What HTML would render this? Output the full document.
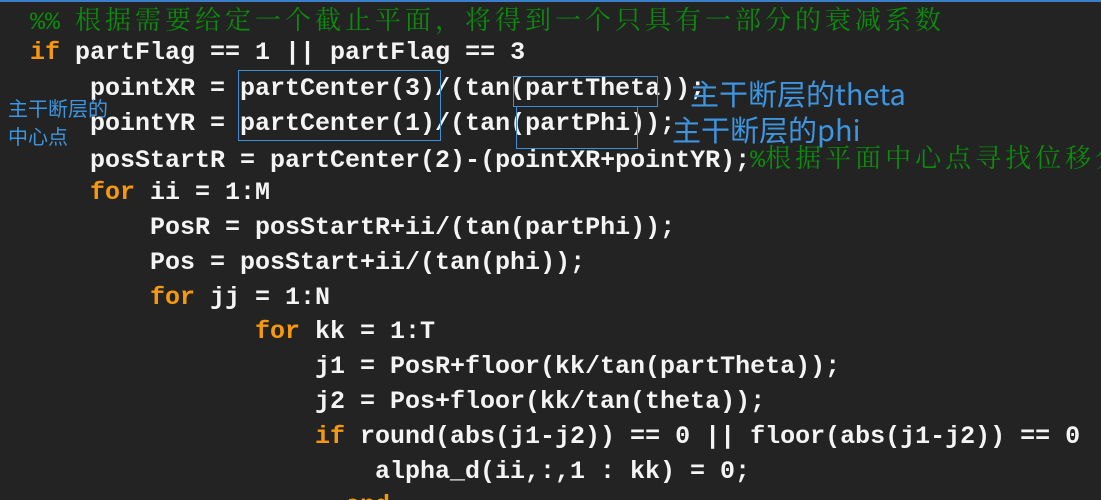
<!DOCTYPE html>
<html><head><meta charset="utf-8">
<style>
html,body{margin:0;padding:0;background:#232323;width:1101px;height:500px;overflow:hidden;position:relative}
.top{position:absolute;left:0;top:0;width:1101px;height:2px;background:#3a7fc8}
.l{position:absolute;white-space:pre;font-family:"Liberation Mono","Noto Sans CJK SC",monospace;font-size:25px;font-weight:bold;color:#f4f4f4;line-height:30px}
.k{color:#f7990f}
.c{color:#0b8c0b;font-weight:normal}
.z{font-family:"Noto Serif CJK SC","Noto Sans CJK SC",serif;font-size:26px;letter-spacing:4px;line-height:30px}
.box{position:absolute;border:1px solid #3d8fd8}
.ann{position:absolute;color:#3e95e0;font-family:"Noto Sans CJK SC","Liberation Sans",sans-serif;white-space:nowrap}
</style></head><body>
<div class="top"></div>
<div class="l c" style="left:30px;top:4px">%% <span class="z">根据需要给定一个截止平面，将得到一个只具有一部分的衰减系数</span></div>
<div class="l" style="left:30px;top:38px"><span class="k">if</span> partFlag == 1 || partFlag == 3</div>
<div class="l" style="left:90px;top:74px">pointXR = partCenter(3)/(tan(partTheta));</div>
<div class="l" style="left:90px;top:109px">pointYR = partCenter(1)/(tan(partPhi));</div>
<div class="l" style="left:90px;top:142px">posStartR = partCenter(2)-(pointXR+pointYR);<span class="c">%<span class="z">根据平面中心点寻找位移分</span></span></div>
<div class="l" style="left:90px;top:178px"><span class="k">for</span> ii = 1:M</div>
<div class="l" style="left:150px;top:213px">PosR = posStartR+ii/(tan(partPhi));</div>
<div class="l" style="left:150px;top:248px">Pos = posStart+ii/(tan(phi));</div>
<div class="l" style="left:150px;top:283px"><span class="k">for</span> jj = 1:N</div>
<div class="l" style="left:255px;top:317px"><span class="k">for</span> kk = 1:T</div>
<div class="l" style="left:315px;top:352px">j1 = PosR+floor(kk/tan(partTheta));</div>
<div class="l" style="left:315px;top:387px">j2 = Pos+floor(kk/tan(theta));</div>
<div class="l" style="left:315px;top:422px"><span class="k">if</span> round(abs(j1-j2)) == 0 || floor(abs(j1-j2)) == 0</div>
<div class="l" style="left:375px;top:457px">alpha_d(ii,:,1 : kk) = 0;</div>
<div class="l k" style="left:345px;top:491px">end</div>
<div class="box" style="left:238px;top:70px;width:201px;height:69px"></div>
<div class="box" style="left:513px;top:76px;width:143px;height:29px"></div>
<div class="box" style="left:516px;top:106px;width:120px;height:41px"></div>
<div class="ann" style="left:690px;top:75px;font-size:29px;line-height:36px">主干断层的theta</div>
<div class="ann" style="left:672px;top:111px;font-size:29px;line-height:36px">主干断层的phi</div>
<div class="ann" style="left:8px;top:94px;font-size:20px;line-height:28px">主干断层的<br>中心点</div>
</body></html>
